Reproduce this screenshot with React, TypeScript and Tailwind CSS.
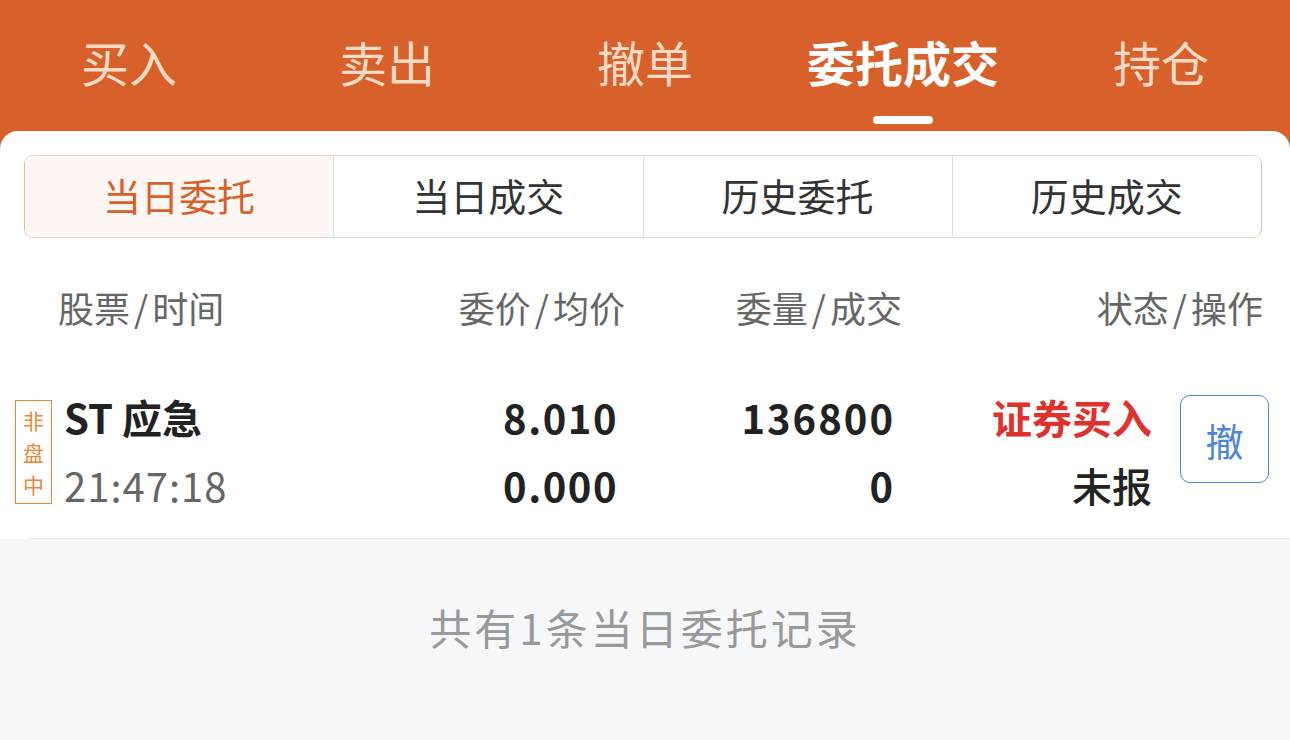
import React from "react";

const tabs = ["买入", "卖出", "撤单", "委托成交", "持仓"];
const segments = ["当日委托", "当日成交", "历史委托", "历史成交"];

function Slash({ a, b }: { a: string; b: string }) {
  return (
    <span>
      {a}
      <span className="mx-[4px]">/</span>
      {b}
    </span>
  );
}

export default function App() {
  const active = 3;
  return (
    <div
      className="w-[1290px] h-[740px] overflow-hidden bg-[#D8602A]"
      style={{ fontFamily: '"Noto Sans CJK SC", "Noto Sans", sans-serif' }}
    >
      {/* top tabs */}
      <div className="flex h-[131px]">
        {tabs.map((t, i) => (
          <div key={t} className="flex-1 flex flex-col items-center pt-[35px]">
            <span
              className={
                i === active
                  ? "text-[48px] leading-[52px] font-semibold text-white"
                  : "text-[48px] leading-[52px] text-[#FADBC6]"
              }
            >
              {t}
            </span>
            <div className={i === active ? "mt-[29px] h-[8px] w-[60px] rounded-full bg-white" : "mt-[29px] h-[8px] w-[60px]"} />
          </div>
        ))}
      </div>

      {/* card */}
      <div className="bg-white rounded-t-[18px] h-[609px] flex flex-col">
        <div className="pt-[24px] pl-[24px] pr-[28px]">
          <div className="flex h-[83px] rounded-[9px] border border-[#dadada] border-x-[#e2bca8] overflow-hidden">
            {segments.map((s, i) => (
              <div
                key={s}
                className={
                  i === 0
                    ? "flex-1 flex items-center justify-center pb-[4px] bg-[#FDF6F2] text-[#D8602A] text-[38px]"
                    : "flex-1 flex items-center justify-center pb-[4px] border-l border-[#dcdcdc] text-[#333333] text-[38px]"
                }
              >
                {s}
              </div>
            ))}
          </div>
        </div>

        {/* column header */}
        <div className="flex h-[132px] pt-[51px] text-[36px] leading-[36px] text-[#666666]">
          <div className="w-[400px] pl-[58px]">
            <Slash a="股票" b="时间" />
          </div>
          <div className="w-[225px] text-right">
            <Slash a="委价" b="均价" />
          </div>
          <div className="w-[277px] text-right">
            <Slash a="委量" b="成交" />
          </div>
          <div className="w-[361px] text-right">
            <Slash a="状态" b="操作" />
          </div>
        </div>

        {/* order row */}
        <div className="flex items-start h-[168px]">
          <div className="w-[400px] flex items-start">
            <div className="ml-[15px] mt-[30px] w-[37px] h-[104px] border border-[#E8883A] flex flex-col items-center justify-center text-[#E8883A] text-[21px] leading-[32px]">
              <span>非</span>
              <span>盘</span>
              <span>中</span>
            </div>
            <div className="ml-[12px] mt-[13px] flex flex-col">
              <span className="h-[68px] flex items-center text-[40px] font-bold text-[#222222]">ST 应急</span>
              <span className="h-[68px] flex items-center text-[40px] tracking-[1px] text-[#666666]">21:47:18</span>
            </div>
          </div>
          <div className="w-[218px] mt-[13px] flex flex-col items-end text-[40px] font-bold tracking-[1.5px] text-[#222222]">
            <span className="h-[68px] flex items-center">8.010</span>
            <span className="h-[68px] flex items-center">0.000</span>
          </div>
          <div className="w-[277px] mt-[13px] flex flex-col items-end text-[40px] font-bold tracking-[2px] text-[#222222]">
            <span className="h-[68px] flex items-center">136800</span>
            <span className="h-[68px] flex items-center">0</span>
          </div>
          <div className="w-[257px] mt-[13px] flex flex-col items-end text-[40px]">
            <span className="h-[68px] flex items-center font-bold text-[#E0322D]">证券买入</span>
            <span className="h-[68px] flex items-center font-medium text-[#222222]">未报</span>
          </div>
          <button className="ml-[28px] mt-[25px] w-[89px] h-[88px] rounded-[10px] border-[1.5px] border-[#4A86D8] text-[#4A86D8] text-[38px] flex items-center justify-center">
            撤
          </button>
        </div>

        <div className="h-px ml-[30px] bg-[#ececec]" />

        {/* footer */}
        <div className="flex-1 bg-[#F6F7F9] flex justify-center pt-[64px]">
          <span className="text-[42px] leading-[48px] tracking-[3px] text-[#999999]">共有1条当日委托记录</span>
        </div>
      </div>
    </div>
  );
}
